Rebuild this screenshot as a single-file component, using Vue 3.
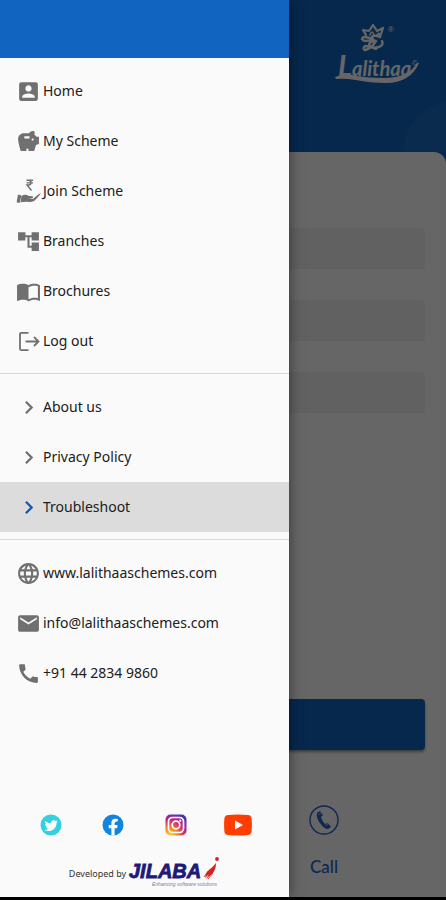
<script setup>
import { ref } from 'vue'

const selected = ref('Troubleshoot')

const menu = [
  { label: 'Home', icon: 'home' },
  { label: 'My Scheme', icon: 'piggy' },
  { label: 'Join Scheme', icon: 'join' },
  { label: 'Branches', icon: 'tree' },
  { label: 'Brochures', icon: 'book' },
  { label: 'Log out', icon: 'logout' },
]
const info = ['About us', 'Privacy Policy', 'Troubleshoot']
const contacts = [
  { label: 'www.lalithaaschemes.com', icon: 'globe', href: '#web' },
  { label: 'info@lalithaaschemes.com', icon: 'mail', href: '#mail' },
  { label: '+91 44 2834 9860', icon: 'phone', href: '#phone' },
]

const paths = {
  home: 'M3 5v14c0 1.1.89 2 2 2h14c1.1 0 2-.9 2-2V5c0-1.100-.9-2-2-2H5c-1.110 0-2 .9-2 2zm12 4c0 1.660-1.340 3-3 3s-3-1.340-3-3 1.340-3 3-3 3 1.340 3 3zm-9 8c0-2 4-3.100 6-3.100s6 1.100 6 3.100v1H6v-1z',
  piggy: 'M19.830 7.500l-2.270-2.270c.07-.42.18-.81.32-1.150.08-.18.12-.37.12-.58 0-.83-.67-1.500-1.500-1.500-1.640 0-3.090.79-4 2h-5C4.460 4 2 6.460 2 9.500S4.500 21 4.500 21H10v-2h2v2h5.500l1.680-5.590 2.820-.94V7.500h-2.170zM13 9H8V7h5v2zm3 2c-.55 0-1-.45-1-1s.45-1 1-1 1 .45 1 1-.45 1-1 1z',
  tree: 'M22 11V3h-7v3H9V3H2v8h7V8h2v10h4v3h7v-8h-7v3h-2V8h2v3z',
  book: 'M21 5c-1.110-.35-2.330-.5-3.500-.5-1.950 0-4.050.4-5.500 1.500-1.450-1.100-3.550-1.500-5.500-1.500S2.450 4.900 1 6v14.650c0 .25.25.5.5.5.1 0 .15-.05.25-.05C3.100 20.450 5.050 20 6.500 20c1.950 0 4.050.4 5.500 1.500 1.350-.85 3.800-1.500 5.500-1.500 1.650 0 3.350.3 4.750 1.050.1.05.15.05.25.05.25 0 .5-.25.5-.5V6c-.6-.45-1.250-.75-2-1zm0 13.500c-1.100-.35-2.300-.5-3.500-.5-1.700 0-4.150.65-5.500 1.500V8c1.350-.85 3.800-1.500 5.500-1.500 1.200 0 2.400.15 3.500.5v11.500z',
  globe: 'M11.990 2C6.470 2 2 6.480 2 12s4.470 10 9.990 10C17.520 22 22 17.520 22 12S17.520 2 11.990 2zm6.930 6h-2.950c-.32-1.250-.78-2.450-1.380-3.560 1.840.63 3.370 1.910 4.330 3.560zM12 4.040c.83 1.200 1.480 2.530 1.910 3.960h-3.820c.43-1.430 1.080-2.760 1.910-3.960zM4.260 14C4.100 13.360 4 12.690 4 12s.1-1.360.26-2h3.380c-.08.66-.14 1.320-.14 2s.06 1.340.14 2H4.260zm.82 2h2.950c.32 1.250.78 2.450 1.380 3.560-1.840-.63-3.370-1.900-4.330-3.560zm2.950-8H5.080c.96-1.660 2.490-2.930 4.330-3.560C8.810 5.550 8.350 6.750 8.030 8zM12 19.960c-.83-1.200-1.480-2.530-1.910-3.960h3.820c-.43 1.430-1.080 2.760-1.910 3.960zM14.340 14H9.660c-.09-.66-.16-1.320-.16-2s.07-1.350.16-2h4.680c.09.65.16 1.320.16 2s-.07 1.340-.16 2zm.25 5.560c.6-1.110 1.060-2.310 1.380-3.560h2.950c-.96 1.650-2.490 2.930-4.330 3.560zM16.360 14c.08-.66.14-1.320.14-2s-.06-1.340-.14-2h3.380c.16.64.26 1.310.26 2s-.1 1.360-.26 2h-3.380z',
  mail: 'M20 4H4c-1.100 0-1.990.9-1.990 2L2 18c0 1.100.9 2 2 2h16c1.100 0 2-.9 2-2V6c0-1.100-.9-2-2-2zm0 4l-8 5-8-5V6l8 5 8-5v2z',
  phone: 'M20.010 15.380c-1.230 0-2.420-.2-3.530-.56-.35-.12-.74-.03-1.010.24l-1.570 1.970c-2.830-1.350-5.480-3.900-6.890-6.830l1.950-1.660c.27-.28.35-.67.24-1.020-.37-1.110-.56-2.300-.56-3.530 0-.54-.45-.99-.99-.99H4.190C3.650 3 3 3.240 3 3.990 3 13.280 10.730 21 20.010 21c.71 0 .99-.63.99-1.180v-3.450c0-.54-.45-.99-.99-.99z',
}
</script>

<template>
  <div class="app">
    <main class="page">
      <header class="banner">
        <svg class="brand" viewBox="0 0 88 62" role="img" aria-label="Lalithaa">
          <g fill="none" stroke="#fff" stroke-linecap="round" stroke-linejoin="round">
            <path d="M32 12 L29 7 L35 8 L39 2 L43 8 L49 5 L46 14" stroke-width="2.200" />
            <path d="M36 12 Q38 6 40 12 M43 12 Q46 8 45 13" stroke-width="1.600" />
            <path d="M46 14 Q38 11 38 15 Q38 18 42 18 Q35 18 35 22 Q37 26 45 24 Q50 22 48 18 M38 16 Q29 12 28 16 Q30 20 39 16 M42 18 Q37 26 31 27 Q28 26 31 23 Q36 23 42 26" stroke-width="2.400" />
          </g>
          <path d="M1 54Q8 51 18 52 32 55 50 55 74 55 83 40L85 40Q76 60 52 60 36 60 22 57 10 55 2 56z" fill="#fff" />
          <text x="4" y="53" class="brand-name"><tspan class="brand-cap">L</tspan>alithaa</text>
          <text x="54" y="9" class="brand-mark">®</text>
          <text x="78" y="43" class="brand-mark">©</text>
        </svg>
      </header>
      <section class="card">
        <div class="field"></div>
        <div class="field"></div>
        <div class="field"></div>
        <button class="submit" type="button" aria-label="Login"></button>
        <div class="actions">
          <a class="call" href="#call">
            <svg viewBox="0 0 30 30" aria-hidden="true">
              <circle cx="15" cy="15" r="14" fill="none" stroke="currentColor" stroke-width="1.400" />
              <path d="M8 8l3-2 3 4-2 2q1 4 4 7l3-1 3 4-3 2Q15 24 11 18 7 13 8 8z" fill="currentColor" />
              <path d="M9.500 9.500l3.500-2M16 20.500l4-2" stroke="#fff" stroke-width=".6" />
            </svg>
            Call
          </a>
        </div>
      </section>
    </main>
    <div class="scrim"></div>

    <aside class="drawer">
      <div class="drawer-head"></div>
      <nav class="group">
        <button v-for="m in menu" :key="m.label" class="row" type="button">
          <svg v-if="m.icon === 'join'" class="icon" viewBox="0 0 25 25" aria-hidden="true">
            <path d="M10.500 1.300h6.500M10.500 3.900h6.500M10.500 1.300h2q2.500 0 2.500 2.400 0 2.300-2.500 2.300h-1.500l4.500 5.500" fill="none" stroke="currentColor" stroke-width="1.400" />
            <path d="M2 15.500l3.400 1-1.800 7.500-3-.8zM5.500 17q4-2.500 7 0l4 .3q1.500.8 0 1.900l-4.500.3 5 .5 4-3.500q2-1.800 4-2.200l-4 5q-3 3.700-6 3.700-6-.8-10.500.2z" fill="currentColor" />
          </svg>
          <svg v-else-if="m.icon === 'logout'" class="icon" viewBox="0 0 25 25" aria-hidden="true">
            <path d="M12.500 3.800H5.500Q4 3.800 4 5.300v14.400q0 1.500 1.500 1.500h7M9.500 12.500h13M18 8l4.500 4.500L18 17" fill="none" stroke="currentColor" stroke-width="1.800" />
          </svg>
          <svg v-else class="icon" viewBox="0 0 24 24" aria-hidden="true"><path :d="paths[m.icon]" fill="currentColor" /></svg>
          <span>{{ m.label }}</span>
        </button>
      </nav>
      <nav class="group">
        <button
          v-for="label in info"
          :key="label"
          class="row"
          :class="{ active: selected === label }"
          type="button"
          @click="selected = label"
        >
          <svg class="icon" viewBox="0 0 24 24" aria-hidden="true"><path d="M9.500 6.500l5.500 5.500-5.500 5.500" fill="none" stroke="currentColor" stroke-width="2.200" /></svg>
          <span>{{ label }}</span>
        </button>
      </nav>
      <div class="group">
        <a v-for="c in contacts" :key="c.label" class="row" :href="c.href">
          <svg class="icon" viewBox="0 0 24 24" aria-hidden="true"><path :d="paths[c.icon]" fill="currentColor" /></svg>
          <span>{{ c.label }}</span>
        </a>
      </div>

      <footer class="foot">
        <div class="social">
          <a href="#twitter" aria-label="Twitter">
            <svg width="22" height="22" viewBox="0 0 22 22">
              <circle cx="11" cy="11" r="10.500" fill="#35cfe0" />
              <path transform="translate(3.500 3.600) scale(.64)" fill="#fff" d="M22.460 6c-.77.35-1.600.58-2.460.69.88-.53 1.560-1.370 1.880-2.380-.83.5-1.750.85-2.720 1.050C18.370 4.500 17.260 4 16 4c-2.350 0-4.270 1.920-4.270 4.290 0 .34.04.67.11.98C8.280 9.090 5.110 7.380 3 4.790c-.37.63-.58 1.370-.58 2.150 0 1.490.75 2.810 1.910 3.560-.71 0-1.370-.2-1.950-.5v.03c0 2.080 1.480 3.820 3.440 4.210a4.220 4.220 0 0 1-1.930.07 4.280 4.280 0 0 0 4 2.980 8.521 8.521 0 0 1-5.330 1.840c-.34 0-.68-.02-1.020-.06C3.440 20.290 5.700 21 8.120 21 16 21 20.330 14.460 20.330 8.790c0-.19 0-.37-.01-.56.84-.6 1.560-1.360 2.140-2.230z" />
            </svg>
          </a>
          <a href="#facebook" aria-label="Facebook">
            <svg width="22" height="22" viewBox="0 0 22 22">
              <circle cx="11" cy="11" r="10.500" fill="#1284de" />
              <path fill="#fff" d="M9.400 21.400v-7.100H6.700v-3.200h2.700V8.700q0-4 4.100-4 1.200 0 2.200.2v2.700h-1.400q-1.700 0-1.700 1.600v1.900h3l-.5 3.200h-2.500v7.100z" />
            </svg>
          </a>
          <a href="#instagram" aria-label="Instagram">
            <svg width="22" height="22" viewBox="0 0 22 22">
              <defs>
                <radialGradient id="ig" cx=".2" cy="1" r="1.150">
                  <stop offset="0" stop-color="#ffd23c" />
                  <stop offset=".3" stop-color="#fb8c1c" />
                  <stop offset=".6" stop-color="#d62976" />
                  <stop offset="1" stop-color="#3b2fc0" />
                </radialGradient>
              </defs>
              <rect x=".5" y=".5" width="21" height="21" rx="5" fill="url(#ig)" />
              <g fill="none" stroke="#fff" stroke-width="1.700">
                <rect x="3.500" y="3.500" width="15" height="15" rx="4" />
                <circle cx="11" cy="11" r="3.800" />
              </g>
              <circle cx="15.300" cy="6.700" r="1.100" fill="#fff" />
            </svg>
          </a>
          <a href="#youtube" aria-label="YouTube">
            <svg width="28" height="22" viewBox="0 0 28 22">
              <path d="M4 1Q14 0 24 1q3.200.4 3.600 3.500.6 6.500 0 13-.4 3.100-3.600 3.500-10 1-20 0-3.200-.4-3.600-3.500-.6-6.500 0-13Q.8 1.400 4 1z" fill="#ff3d00" />
              <path d="M11 6.500v9l8-4.500z" fill="#fff" />
            </svg>
          </a>
        </div>
        <div class="credit">
          <span>Developed by</span>
          <svg width="92" height="31" viewBox="0 0 92 31" role="img" aria-label="JILABA Enhancing software solutions">
            <text x="1" y="22" class="jilaba">JILABA</text>
            <text x="24" y="30" class="tagline">Enhancing software solutions</text>
            <g fill="#d81e1e">
              <circle cx="89" cy="3" r="1.900" />
              <path d="M88 7q0 7-4 11l-6 5 3-5-4 4q1-6 5-9 3-2 6-6z" />
              <path d="M85 17l-5 6M80 15l-4 6" stroke="#d81e1e" stroke-width=".8" />
            </g>
          </svg>
        </div>
      </footer>
    </aside>
  </div>
</template>

<style>
body {
  margin: 0;
}
</style>

<style scoped>
.app {
  position: relative;
  display: flex;
  min-height: 100vh;
  box-sizing: border-box;
  border-bottom: 3px solid #000;
  font-family: "Noto Sans", sans-serif;
  background: #1165c1;
}
.page {
  flex: 1;
  display: flex;
  flex-direction: column;
}
.banner {
  display: flex;
  justify-content: flex-end;
  box-sizing: border-box;
  height: 152px;
  padding: 23px 24px 0;
  background: radial-gradient(circle at calc(100% + 8px) 100%, #1c6dc4 0 50px, transparent 51px);
}
.brand {
  width: 88px;
  height: 62px;
}
.brand-name {
  font: italic 700 20px Lato, sans-serif;
  fill: #fff;
}
.brand-cap {
  font-size: 29px;
}
.brand-mark {
  font: 8px "Liberation Sans", sans-serif;
  fill: #fff;
}
.card {
  flex: 1;
  display: flex;
  flex-direction: column;
  gap: 31px;
  padding: 76px 21px 18px;
  border-radius: 12px 12px 0 0;
  background: #fff;
}
.field {
  height: 41px;
  border-radius: 4px;
  background: #f2f2f2;
}
.submit {
  height: 51px;
  margin-top: auto;
  border: 0;
  border-radius: 4px;
  background: #1165c1;
  box-shadow: 0 2px 3px rgba(0, 0, 0, 0.4);
}
.actions {
  display: grid;
  grid-template-columns: 1fr 1fr;
  padding-top: 24px;
}
.call {
  grid-column: 2;
  display: flex;
  flex-direction: column;
  align-items: center;
  gap: 20px;
  color: #2464c8;
  font: 500 17px/24px Lato, sans-serif;
  text-decoration: none;
}
.call svg {
  width: 30px;
  height: 30px;
}
.scrim {
  position: absolute;
  inset: 0;
  background: rgba(0, 0, 0, 0.6);
}
.drawer {
  position: absolute;
  inset: 0 auto 0 0;
  display: flex;
  flex-direction: column;
  width: 64.8%;
  background: #fafafa;
  box-shadow: 0 0 12px rgba(0, 0, 0, 0.5);
}
.drawer-head {
  height: 58px;
  flex: none;
  background: #1165c1;
}
.group {
  display: flex;
  flex-direction: column;
  padding: 8px 0 7px;
}
.group + .group {
  border-top: 1px solid #d8d8d8;
}
.row {
  display: flex;
  align-items: center;
  gap: 2px;
  height: 50px;
  padding: 0 16px;
  border: 0;
  background: none;
  color: #202020;
  font: 14px/20px "Noto Sans", sans-serif;
  text-align: left;
  text-decoration: none;
}
.row.active {
  background: #dcdcdc;
}
.icon {
  flex: none;
  width: 25px;
  height: 25px;
  color: #707070;
}
.active .icon {
  color: #1159b8;
}
.foot {
  display: flex;
  flex-direction: column;
  gap: 20px;
  margin-top: auto;
  padding-bottom: 10px;
}
.social {
  display: flex;
  justify-content: space-between;
  padding: 0 37px;
}
.social a {
  display: flex;
  justify-content: center;
  width: 28px;
}
.credit {
  display: flex;
  align-items: center;
  justify-content: center;
  gap: 2px;
  color: #333;
  font-size: 9px;
}
.credit span {
  padding-top: 4px;
}
.jilaba {
  font: italic 700 20px "Liberation Sans", sans-serif;
  fill: #1d1a78;
  stroke: #1d1a78;
  stroke-width: 0.8px;
}
.tagline {
  font: italic 5px "Liberation Sans", sans-serif;
  fill: #7a7aa0;
}
</style>
